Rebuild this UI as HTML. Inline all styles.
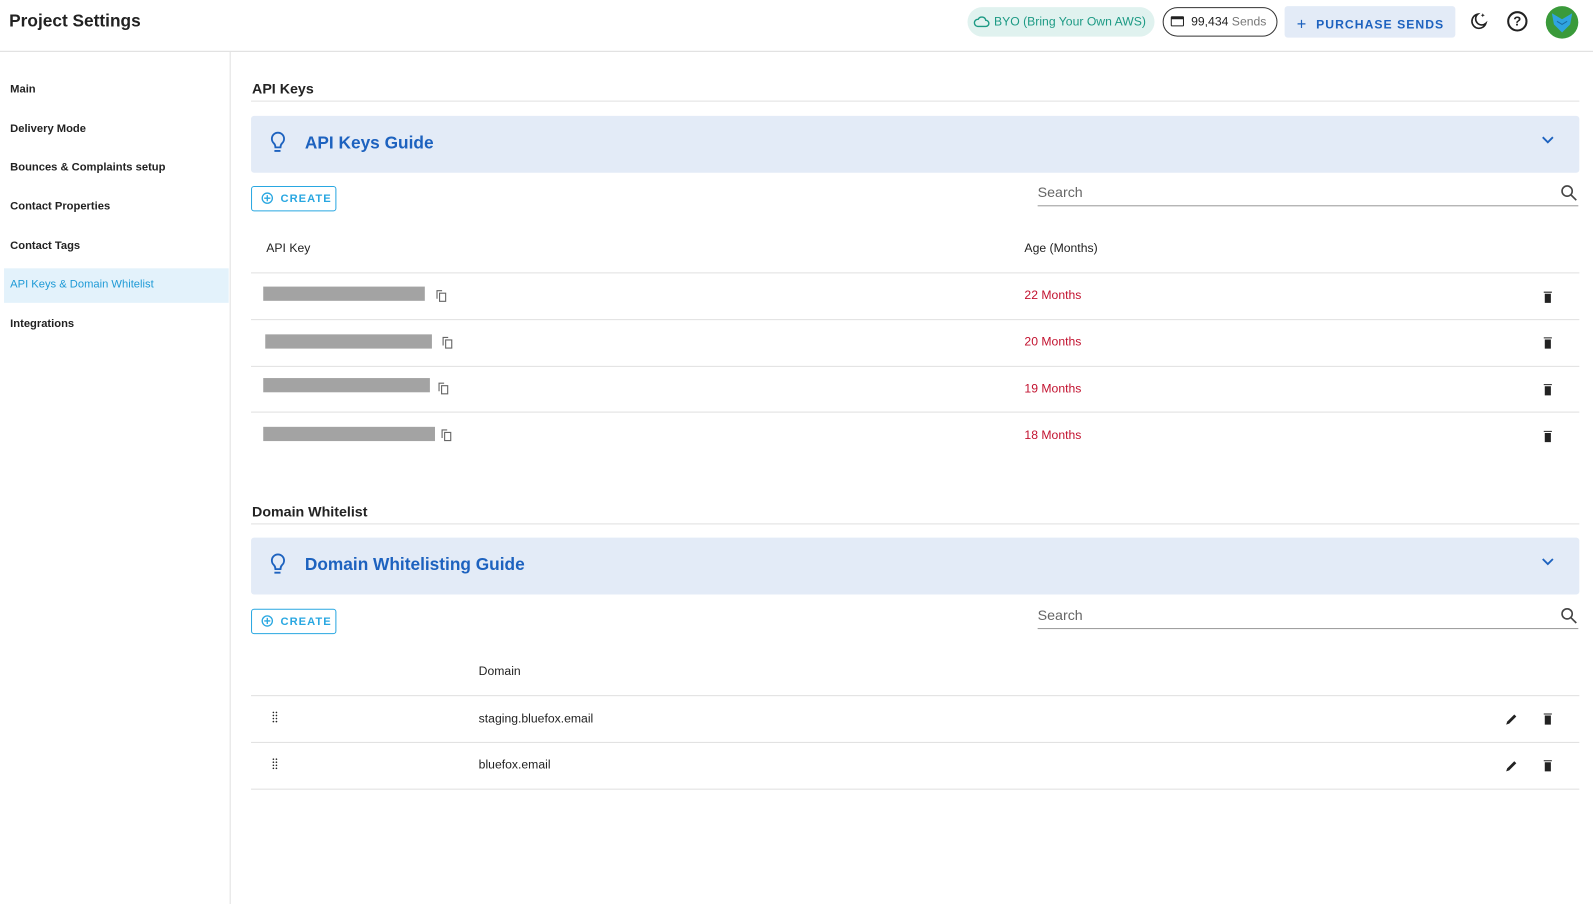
<!DOCTYPE html>
<html><head><meta charset="utf-8"><style>
*{box-sizing:border-box;margin:0;padding:0}
html,body{width:1593px;height:904px;overflow:hidden;background:#fff}
#w{width:1568px;height:890px;position:relative;transform:scale(1.0163);transform-origin:0 0;font-family:"Liberation Sans",Arial,sans-serif;color:#222}
.abs{position:absolute;white-space:nowrap}
.hdr{left:0;top:0;width:1568px;height:51px;border-bottom:1px solid #ddd}
.side{left:0;top:51px;width:227px;height:853px;border-right:1px solid #e0e0e0}
.nav{position:absolute;left:10px;font-size:11px;font-weight:bold;color:#222}
.sel{left:4px;top:264px;width:221px;height:34px;background:#e3f2fb}
.sect{font-size:14px;font-weight:bold;left:248px}
.line{height:1px;background:#e0e0e0}
.guide{left:247px;width:1307px;height:56px;background:#e3ebf7;border-radius:3px}
.guide span{position:absolute;left:53px;top:17px;font-size:17px;font-weight:bold;color:#1d62bf}
.create{left:247px;width:84px;height:25px;border:1px solid #29a7e1;border-radius:3px;color:#29a7e1;font-size:11px;font-weight:bold;letter-spacing:1px;padding:6px 0 0 28px}
.search{left:1021px;width:532px;border-bottom:1px solid #999;font-size:14px;color:#666;height:25px;padding-top:3px}
.bar{background:#a3a3a3;height:14px}
.red{color:#c2122f;font-size:12px;left:1008px}
.t{font-size:12px}
</style></head><body><div id="w">
<div class="abs hdr"></div>
<div class="abs" style="left:9px;top:11px;font-size:17px;font-weight:bold">Project Settings</div>
<div class="abs" style="left:952px;top:7px;width:184px;height:29px;border-radius:15px;background:#e0f2ef;color:#1c9a84;font-size:12px;padding:7px 0 0 26px">BYO (Bring Your Own AWS)</div>
<svg class="abs" style="left:958px;top:14px" width="16" height="14" viewBox="0 0 16 14"><path d="M4 12h8a3 3 0 0 0 0-6 4 4 0 0 0-7.5-1A3.5 3.5 0 0 0 4 12z" fill="none" stroke="#1c9a84" stroke-width="1.4"/></svg>
<div class="abs" style="left:1144px;top:7px;width:113px;height:29px;border-radius:15px;border:1.5px solid #333;font-size:12px;padding:6px 0 0 27px">99,434 <span style="color:#777">Sends</span></div>
<div class="abs" style="left:1152px;top:16px;width:13px;height:10px;border:1.5px solid #222;border-top-width:3px;border-radius:1px"></div>
<div class="abs" style="left:1264px;top:6px;width:168px;height:31px;background:#e3ebf7;border-radius:3px;color:#1d62bf;font-size:12px;font-weight:bold;letter-spacing:1px;padding:9px 0 0 12px"><span style="font-size:16px;font-weight:normal;position:relative;top:1px">+</span>&nbsp;&nbsp;PURCHASE SENDS</div>
<svg class="abs" style="left:1445px;top:11px" width="20" height="20" viewBox="0 0 20 20"><path d="M9 3a7 7 0 1 0 8 9A6 6 0 0 1 9 3z" fill="none" stroke="#222" stroke-width="1.6"/><path d="M14 2l.6 1.4L16 4l-1.4.6L14 6l-.6-1.4L12 4l1.4-.6z" fill="#222"/></svg>
<div class="abs" style="left:1483px;top:11px;width:20px;height:20px;border:2px solid #222;border-radius:50%;font-size:13px;font-weight:bold;text-align:center;line-height:16px">?</div>
<div class="abs" style="left:1521px;top:6px;width:32px;height:32px;border-radius:50%;background:#3a9a3a"><svg width="32" height="32"><path d="M6 7l10 6 10-6-2 11-8 8-8-8z" fill="#2fa4e0"/><path d="M11 15l5 3 5-3" stroke="#1a6aa0" fill="none"/></svg></div>

<div class="abs side"></div>
<div class="abs sel"></div>
<div class="nav" style="top:82px">Main</div>
<div class="nav" style="top:121px">Delivery Mode</div>
<div class="nav" style="top:159px">Bounces &amp; Complaints setup</div>
<div class="nav" style="top:197px">Contact Properties</div>
<div class="nav" style="top:236px">Contact Tags</div>
<div class="nav" style="top:274px;color:#1e9ad6;font-weight:normal">API Keys &amp; Domain Whitelist</div>
<div class="nav" style="top:313px">Integrations</div>

<div class="abs sect" style="top:79px">API Keys</div>
<div class="abs line" style="left:247px;top:99px;width:1307px"></div>
<div class="abs guide" style="top:114px"><span>API Keys Guide</span></div>
<div class="abs create" style="top:183px">CREATE</div>
<div class="abs search" style="top:178px">Search</div>
<div class="abs t" style="left:262px;top:237px">API Key</div>
<div class="abs t" style="left:1008px;top:237px">Age (Months)</div>
<div class="abs line" style="left:247px;top:268px;width:1307px"></div>
<div class="abs bar" style="left:259px;top:282px;width:159px"></div>
<div class="abs red" style="top:283px">22 Months</div>
<div class="abs line" style="left:247px;top:314px;width:1307px"></div>
<div class="abs bar" style="left:261px;top:329px;width:164px"></div>
<div class="abs red" style="top:329px">20 Months</div>
<div class="abs line" style="left:247px;top:360px;width:1307px"></div>
<div class="abs bar" style="left:259px;top:372px;width:164px"></div>
<div class="abs red" style="top:375px">19 Months</div>
<div class="abs line" style="left:247px;top:405px;width:1307px"></div>
<div class="abs bar" style="left:259px;top:420px;width:169px"></div>
<div class="abs red" style="top:421px">18 Months</div>

<div class="abs sect" style="top:495px">Domain Whitelist</div>
<div class="abs line" style="left:247px;top:515px;width:1307px"></div>
<div class="abs guide" style="top:529px"><span>Domain Whitelisting Guide</span></div>
<div class="abs create" style="top:599px">CREATE</div>
<div class="abs search" style="top:594px">Search</div>
<div class="abs t" style="left:471px;top:653px">Domain</div>
<div class="abs line" style="left:247px;top:684px;width:1307px"></div>
<div class="abs t" style="left:471px;top:700px">staging.bluefox.email</div>
<div class="abs line" style="left:247px;top:730px;width:1307px"></div>
<div class="abs t" style="left:471px;top:745px">bluefox.email</div>
<div class="abs line" style="left:247px;top:776px;width:1307px"></div>

<svg class="abs" style="left:0;top:0" width="1593" height="904">
<g fill="none" stroke="#1d62bf" stroke-width="1.8"><path d="M269.5 141a6 6 0 1 1 8 0c-1 1-1.5 2-1.5 4h-5c0-2-.5-3-1.5-4z M270 148.5h6"/><path d="M269.5 556a6 6 0 1 1 8 0c-1 1-1.5 2-1.5 4h-5c0-2-.5-3-1.5-4z M270 563.5h6"/>
<path d="M1518 135l5 5 5-5M1518 550l5 5 5-5"/></g>
<g fill="none" stroke="#29a7e1" stroke-width="1.3"><circle cx="263" cy="195" r="5"/><path d="M263 192v6M260 195h6"/><circle cx="263" cy="611" r="5"/><path d="M263 608v6M260 611h6"/></g>
<g fill="none" stroke="#444" stroke-width="1.6"><circle cx="1542" cy="188" r="5"/><path d="M1546 192l5 5"/><circle cx="1542" cy="604" r="5"/><path d="M1546 608l5 5"/></g>
<g fill="none" stroke="#666" stroke-width="1.1">
<path d="M430 294v-8h5M432.5 288.5h6v8h-6z"/><path d="M436 340v-8h5M438.5 334.5h6v8h-6z"/><path d="M432 385v-8h5M434.5 379.5h6v8h-6z"/><path d="M435 431v-8h5M437.5 425.5h6v8h-6z"/></g>
<g fill="#222"><path d="M1519 287h8v1h-8zM1520 289h6v9h-6z"/><path d="M1519 332h8v1h-8zM1520 334h6v9h-6z"/><path d="M1519 378h8v1h-8zM1520 380h6v9h-6z"/><path d="M1519 424h8v1h-8zM1520 426h6v9h-6z"/><path d="M1519 702h8v1h-8zM1520 704h6v9h-6z"/><path d="M1519 748h8v1h-8zM1520 750h6v9h-6z"/>
<path d="M1482 713l1-3 7-7 2 2-7 7z"/><path d="M1482 759l1-3 7-7 2 2-7 7z"/>
<circle cx="269" cy="701" r=".8"/><circle cx="272" cy="701" r=".8"/><circle cx="269" cy="704" r=".8"/><circle cx="272" cy="704" r=".8"/><circle cx="269" cy="707" r=".8"/><circle cx="272" cy="707" r=".8"/><circle cx="269" cy="710" r=".8"/><circle cx="272" cy="710" r=".8"/>
<circle cx="269" cy="747" r=".8"/><circle cx="272" cy="747" r=".8"/><circle cx="269" cy="750" r=".8"/><circle cx="272" cy="750" r=".8"/><circle cx="269" cy="753" r=".8"/><circle cx="272" cy="753" r=".8"/><circle cx="269" cy="756" r=".8"/><circle cx="272" cy="756" r=".8"/></g>
</svg>
</div></body></html>
